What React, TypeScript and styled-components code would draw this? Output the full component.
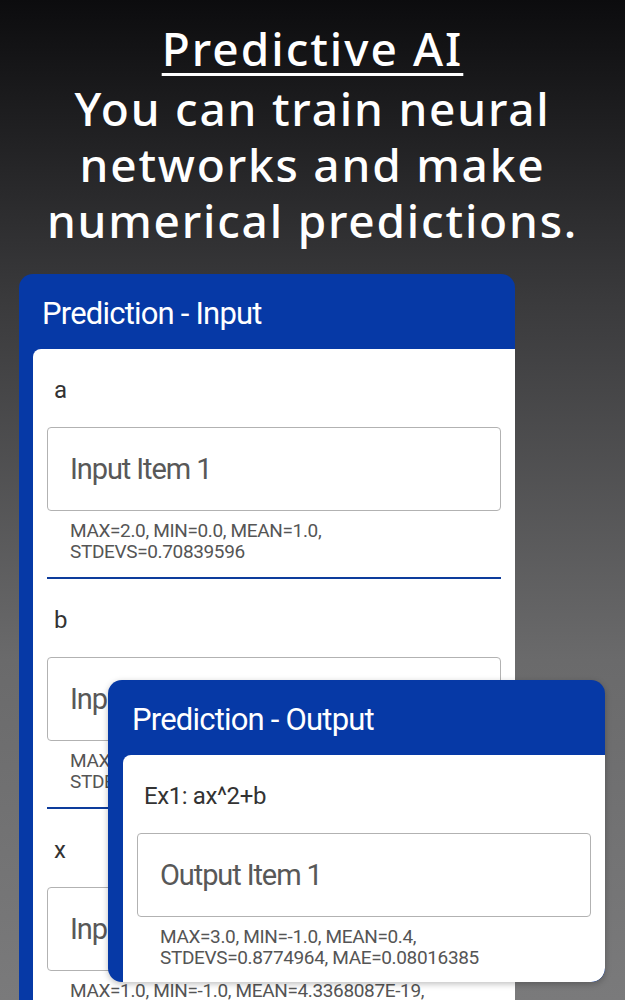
import { FC } from 'react'
import styled, { createGlobalStyle } from 'styled-components'

// Plain palette, no theme provider
const blue = '#0639a6'
const uiFont = `"Roboto", "Liberation Sans", sans-serif`

const GlobalStyle = createGlobalStyle`
  html, body {
    margin: 0;
    padding: 0;
  }
  body {
    background: #0c0c0e;
    overflow: hidden;
  }
  * {
    box-sizing: border-box;
  }
`

const Page = styled.div`
  width: 625px;
  height: 1000px;
  overflow: hidden;
  background: linear-gradient(180deg, #0c0c0e 0%, #3a3a3c 30%, #6a6a6b 66%, #7a7a7b 100%);
  display: flex;
  flex-direction: column;
  align-items: center;
`

const Headline = styled.header`
  padding-top: 20px;
  text-align: center;
  color: #fff;
  font-family: "Noto Sans", "DejaVu Sans", sans-serif;
  font-weight: 500;
`

const Title = styled.h1`
  margin: 0;
  font-size: 46px;
  font-weight: 500;
  line-height: 56px;
  letter-spacing: 2px;
  text-decoration: underline;
  text-decoration-thickness: 3px;
  text-underline-offset: 7px;
`

const Subtitle = styled.p`
  margin: 4px 0 0;
  font-size: 46px;
  line-height: 56px;
  letter-spacing: 1.8px;
`

const Stage = styled.div`
  position: relative;
  align-self: flex-start;
  margin: 26px 0 0 19px;
  width: 496px;
`

// Blue framed card with a header strip and white body
const Card = styled.section<{ $overlay?: boolean }>`
  background: ${blue};
  border-radius: 14px;
  padding-left: ${p => (p.$overlay ? 15 : 14)}px;
  overflow: hidden;
  font-family: ${uiFont};
  ${p =>
    p.$overlay
      ? `
    position: absolute;
    left: 89px;
    top: 406px;
    width: 497px;
    height: 302px;
    box-shadow: 0 2px 6px rgba(0, 0, 0, 0.25);
  `
      : `
    border-bottom-left-radius: 0;
    border-bottom-right-radius: 0;
  `}
`

const CardHeader = styled.h2`
  margin: 0;
  height: 75px;
  display: flex;
  align-items: center;
  padding: 4px 0 0 9px;
  color: #fff;
  font-size: 31px;
  font-weight: 400;
  letter-spacing: -0.8px;
`

const CardBody = styled.div<{ $overlay?: boolean }>`
  background: #fff;
  border-top-left-radius: 8px;
  padding: 0 14px ${p => (p.$overlay ? 16 : 0)}px;
  ${p => (p.$overlay ? 'border-bottom-right-radius: 14px; height: 227px;' : '')}
`

const Field = styled.div`
  padding-top: 26px;
  padding-bottom: 15px;
  border-bottom: 2px solid #0d3c9c;

  &:last-child {
    border-bottom: none;
  }
`

const FieldLabel = styled.label`
  display: block;
  padding-left: 7px;
  font-size: 24px;
  line-height: 30px;
  color: #333;
  letter-spacing: -0.4px;
`

const ValueBox = styled.input`
  display: block;
  margin-top: 22px;
  width: 100%;
  height: 84px;
  padding: 0 22px;
  border: 1px solid #b2b2b2;
  border-radius: 4px;
  background: #fff;
  font-family: ${uiFont};
  font-size: 29px;
  letter-spacing: -1.1px;
  outline: none;

  &::placeholder {
    color: #585858;
  }
`

const Stats = styled.p`
  margin: 9px 0 0;
  padding-left: 23px;
  font-size: 19px;
  line-height: 21px;
  letter-spacing: -0.35px;
  color: #555;
`

type FieldProps = {
  label: string
  placeholder: string
  stats: [string, string]
}

const PredictionField: FC<FieldProps> = ({ label, placeholder, stats }) => (
  <Field>
    <FieldLabel>{label}</FieldLabel>
    <ValueBox placeholder={placeholder} readOnly />
    <Stats>
      {stats[0]}
      <br />
      {stats[1]}
    </Stats>
  </Field>
)

const inputs: FieldProps[] = [
  { label: 'a', placeholder: 'Input Item 1', stats: ['MAX=2.0, MIN=0.0, MEAN=1.0,', 'STDEVS=0.70839596'] },
  { label: 'b', placeholder: 'Input Item 2', stats: ['MAX=2.0, MIN=0.0, MEAN=1.0,', 'STDEVS=0.70839596'] },
  { label: 'x', placeholder: 'Input Item 3', stats: ['MAX=1.0, MIN=-1.0, MEAN=4.3368087E-19,', 'STDEVS=0.5821179'] },
]

const App = () => (
  <>
    <GlobalStyle />
    <Page>
      <Headline>
        <Title>Predictive AI</Title>
        <Subtitle>
          You can train neural
          <br />
          networks and make
          <br />
          numerical predictions.
        </Subtitle>
      </Headline>

      <Stage>
        <Card>
          <CardHeader>Prediction - Input</CardHeader>
          <CardBody>
            {inputs.map(field => (
              <PredictionField key={field.label} {...field} />
            ))}
          </CardBody>
        </Card>

        <Card $overlay>
          <CardHeader>Prediction - Output</CardHeader>
          <CardBody $overlay>
            <PredictionField
              label="Ex1: ax^2+b"
              placeholder="Output Item 1"
              stats={['MAX=3.0, MIN=-1.0, MEAN=0.4,', 'STDEVS=0.8774964, MAE=0.08016385']}
            />
          </CardBody>
        </Card>
      </Stage>
    </Page>
  </>
)

export default App
